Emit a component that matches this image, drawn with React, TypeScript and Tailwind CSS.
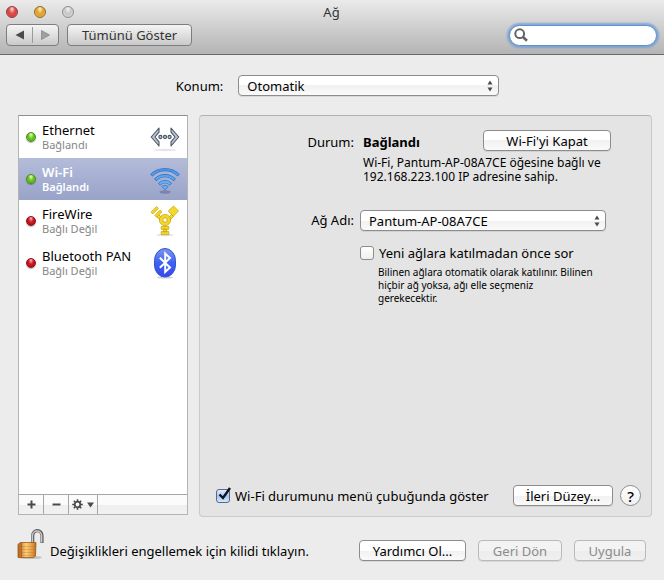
import { useState } from "react";
import type { ButtonHTMLAttributes, ReactNode } from "react";
import clsx from "clsx";

function PushButton({ className, children, ...rest }: ButtonHTMLAttributes<HTMLButtonElement>) {
  return (
    <button
      type="button"
      className={clsx(
        "flex h-[21px] shrink-0 items-center justify-center rounded-[4px] border whitespace-nowrap",
        "border-[#8c8c8c] bg-linear-to-b from-white from-50% via-[#f1f1f1] via-50% to-[#fafafa] shadow-[0_1px_0_rgba(0,0,0,0.08)]",
        "disabled:border-[#b9b9b9] disabled:from-[#f3f3f3] disabled:via-[#ececec] disabled:to-[#f0f0f0] disabled:text-[#8b8b8b]",
        className,
      )}
      {...rest}
    >
      {children}
    </button>
  );
}

function PopUp({ id, value, className }: { id: string; value: string; className: string }) {
  return (
    <div className={clsx("relative h-[21px]", className)}>
      <select
        id={id}
        defaultValue={value}
        className="h-full w-full appearance-none rounded-[4px] border border-[#8c8c8c] bg-linear-to-b from-white from-50% via-[#f1f1f1] via-50% to-[#fafafa] px-2 leading-4 shadow-[0_1px_0_rgba(0,0,0,0.08)] outline-none"
      >
        <option>{value}</option>
      </select>
      <svg className="pointer-events-none absolute top-[5px] right-[6px]" width="6" height="12" viewBox="0 0 6 12" fill="#4a4a4a">
        <path d="M3 0.5 5.5 4.5H0.5ZM3 11.5 5.5 7.5H0.5Z" />
      </svg>
    </div>
  );
}

function CheckBox({ id, label, initial }: { id: string; label: string; initial: boolean }) {
  const [on, setOn] = useState(initial);
  return (
    <div className="flex items-center gap-[5px]">
      <span className="relative size-[14px] shrink-0">
        <input
          id={id}
          type="checkbox"
          checked={on}
          onChange={(e) => setOn(e.target.checked)}
          className="block size-full appearance-none rounded-[3px] border border-[#8c8c8c] bg-linear-to-b from-white to-[#efefef] checked:border-[#5a6590] checked:from-[#e3edfb] checked:via-[#a5c5ee] checked:to-[#cfe9fd]"
        />
        {on && (
          <svg className="pointer-events-none absolute -top-[3px] left-0" width="17" height="17" viewBox="0 0 17 17" fill="none" stroke="#10131f" strokeWidth="2.4">
            <path d="M3.5 8.5 7 12 14 2" />
          </svg>
        )}
      </span>
      <label htmlFor={id} className="whitespace-nowrap">{label}</label>
    </div>
  );
}

function EthernetIcon() {
  return (
    <svg width="30" height="32" viewBox="0 0 30 32">
      <ellipse cx="15" cy="29" rx="12" ry="1.2" fill="#000" opacity="0.1" />
      <g fill="#b9c2cf" stroke="#4d5768" strokeWidth="1.1" strokeLinejoin="round">
        <path d="M9 7 1.2 16 9 25V20.8L5 16 9 11.2Z" />
        <path d="M21 7 28.8 16 21 25V20.8L25 16 21 11.2Z" />
        <circle cx="10.4" cy="16" r="1.6" />
        <circle cx="15" cy="16" r="1.6" />
        <circle cx="19.6" cy="16" r="1.6" />
      </g>
    </svg>
  );
}

function WifiIcon() {
  return (
    <svg width="30" height="32" viewBox="0 0 30 32">
      <defs>
        <linearGradient id="wifi" x1="0" y1="0" x2="0" y2="32" gradientUnits="userSpaceOnUse">
          <stop offset="0.2" stopColor="#4a94e8" />
          <stop offset="0.8" stopColor="#74bcfc" />
        </linearGradient>
      </defs>
      <ellipse cx="15" cy="29" rx="5.5" ry="1.8" fill="#3c4568" opacity="0.35" />
      <g fill="none" stroke="#2d6fc4" strokeWidth="3.2">
        <path d="M1.3 12.4C9 4.6 21 4.6 28.7 12.4" />
        <path d="M5.2 17C11 11.2 19 11.2 24.8 17" />
        <path d="M9.1 21.4C12.8 18 17.2 18 20.9 21.4" />
      </g>
      <g fill="none" stroke="url(#wifi)" strokeWidth="2">
        <path d="M1.8 12C9.3 4.8 20.7 4.8 28.2 12" />
        <path d="M5.7 16.6C11.2 11.4 18.8 11.4 24.3 16.6" />
        <path d="M9.6 21C13 18.2 17 18.2 20.4 21" />
      </g>
      <path d="M11.8 23.6C13.7 22 16.3 22 18.2 23.6L15 27Z" fill="#63aef6" stroke="#2d6fc4" strokeWidth="0.7" />
    </svg>
  );
}

function FireWireIcon() {
  return (
    <svg width="30" height="32" viewBox="0 0 30 32">
      <ellipse cx="15" cy="30" rx="9" ry="1.2" fill="#000" opacity="0.12" />
      <g fill="#f4d92c" stroke="#c9a70c" strokeWidth="0.8" strokeLinejoin="round">
        <path d="M8.5 9.5 13 14 11 16 6.5 11.5ZM21.5 9.5 17 14 19 16 23.5 11.5Z" />
        <path d="M18.3 6 23.5 1 28.5 6 23.3 11.2Z" />
        <path d="M4.8 10.4 10.2 5 12 6.8 6.6 12.2Z" />
        <path d="M1 7.2 6.6 1.6 8.4 3.4 2.8 9Z" />
        <circle cx="15" cy="15" r="5.6" />
        <path d="M13.3 24H16.7V26.8H13.3ZM11.2 21.5H18.8V24.3H11.2ZM11.2 26.6H18.8V29.6H11.2Z" />
      </g>
      <circle cx="15" cy="15" r="2.3" fill="#fffbe0" stroke="#c9a70c" strokeWidth="0.9" />
    </svg>
  );
}

function BluetoothIcon() {
  return (
    <svg width="30" height="32" viewBox="0 0 30 32">
      <defs>
        <linearGradient id="bt" x1="0" y1="0" x2="0" y2="1">
          <stop offset="0" stopColor="#8095f2" />
          <stop offset="0.5" stopColor="#3f63f0" />
          <stop offset="1" stopColor="#3747ee" />
        </linearGradient>
      </defs>
      <ellipse cx="15" cy="30.5" rx="8" ry="1" fill="#000" opacity="0.2" />
      <rect x="4.5" y="1.5" width="21" height="28.5" rx="10.5" ry="12" fill="url(#bt)" stroke="#2c55cf" />
      <path d="M9.8 10.7 20 20.5 15.2 25V6.5L20 11 9.8 20.8" fill="none" stroke="#fff" strokeWidth="2" />
    </svg>
  );
}

const services: { name: string; state: string; up: boolean; icon: ReactNode }[] = [
  { name: "Ethernet", state: "Bağlandı", up: true, icon: <EthernetIcon /> },
  { name: "Wi-Fi", state: "Bağlandı", up: true, icon: <WifiIcon /> },
  { name: "FireWire", state: "Bağlı Değil", up: false, icon: <FireWireIcon /> },
  { name: "Bluetooth PAN", state: "Bağlı Değil", up: false, icon: <BluetoothIcon /> },
];

function StatusDot({ up }: { up: boolean }) {
  return (
    <span
      className={clsx(
        "size-[10px] shrink-0 rounded-full border shadow-[0_1px_1px_rgba(0,0,0,0.3)]",
        up
          ? "border-[#4b8a14] bg-[radial-gradient(ellipse_at_50%_20%,#e4f8c8_0%,#6ccb24_45%,#58b814_65%,#b0f85c_100%)]"
          : "border-[#8c1018] bg-[radial-gradient(ellipse_at_50%_15%,#f6c4c4_0%,#d4202a_40%,#b80c16_70%,#f05050_100%)]",
      )}
    />
  );
}

function Sidebar() {
  const [selected, setSelected] = useState("Wi-Fi");
  return (
    <aside className="mb-[2px] flex w-[170px] shrink-0 flex-col border border-[#b4b4b4] border-t-[#8e8e8e] bg-white">
      <ul className="flex-1">
        {services.map((s) => {
          const active = s.name === selected;
          return (
            <li key={s.name}>
              <button
                type="button"
                onClick={() => setSelected(s.name)}
                className={clsx(
                  "flex h-[42px] w-full items-center gap-[6px] px-[7px] text-left",
                  active && "bg-linear-to-b from-[#b4bcda] to-[#99a3c9] text-white",
                )}
              >
                <StatusDot up={s.up} />
                <span className="flex min-w-0 flex-1 flex-col pb-[2px] whitespace-nowrap">
                  <span className={clsx("text-[13px] leading-4", active && "font-semibold")}>{s.name}</span>
                  <span className={clsx("text-[11px] leading-[13px]", active ? "font-semibold" : "text-[#868686]")}>{s.state}</span>
                </span>
                <span className="-ml-8 shrink-0">{s.icon}</span>
              </button>
            </li>
          );
        })}
      </ul>
      <div className="flex h-5 border-t border-[#a6a6a6] bg-linear-to-b from-[#fbfbfb] from-50% via-[#efefef] via-50% to-[#f1f1f1]">
        <button type="button" aria-label="+" className="flex w-[25px] items-center justify-center border-r border-[#a6a6a6]">
          <svg width="9" height="9" viewBox="0 0 9 9" stroke="#4a4a4a" strokeWidth="2"><path d="M0.5 4.5H8.5M4.5 0.5V8.5" /></svg>
        </button>
        <button type="button" aria-label="−" className="flex w-[25px] items-center justify-center border-r border-[#a6a6a6]">
          <svg width="9" height="9" viewBox="0 0 9 9" stroke="#4a4a4a" strokeWidth="2"><path d="M0.5 4.5H8.5" /></svg>
        </button>
        <button type="button" aria-label="⚙" className="flex w-[29px] items-center justify-center gap-1 border-r border-[#a6a6a6]">
          <svg width="11" height="11" viewBox="0 0 11 11" fill="none" stroke="#4a4a4a">
            <circle cx="5.5" cy="5.5" r="2.8" strokeWidth="1.8" />
            <path strokeWidth="1.6" d="M5.5 0.2V2.2M5.5 8.8V10.8M0.2 5.5H2.2M8.8 5.5H10.8M1.8 1.8 3.2 3.2M7.8 7.8 9.2 9.2M1.8 9.2 3.2 7.8M7.8 3.2 9.2 1.8" />
          </svg>
          <svg width="7" height="6" viewBox="0 0 7 6" fill="#4a4a4a"><path d="M0 0.5H7L3.5 5.5Z" /></svg>
        </button>
      </div>
    </aside>
  );
}

function LockIcon() {
  return (
    <svg width="28" height="32" viewBox="0 0 28 32">
      <defs>
        <linearGradient id="lock" x1="0" y1="0" x2="1" y2="0">
          <stop offset="0" stopColor="#a85d1c" />
          <stop offset="0.18" stopColor="#d98a38" />
          <stop offset="0.45" stopColor="#f9cf7c" />
          <stop offset="0.8" stopColor="#e59a3c" />
          <stop offset="1" stopColor="#b66a1c" />
        </linearGradient>
      </defs>
      <ellipse cx="13" cy="28.5" rx="12" ry="1.6" fill="#000" opacity="0.18" />
      <path d="M15.7 14V7C15.7 -0.2 25 -0.2 25 7V14" fill="none" stroke="#5d5d5d" strokeWidth="3.2" />
      <path d="M15.4 13V7C15.4 0.2 24.6 0.2 24.6 7V13.5" fill="none" stroke="#c9c9c9" strokeWidth="1.5" />
      <path d="M1 15.5 3 13.5H19L18.5 27 16.5 28.5H1Z" fill="url(#lock)" stroke="#9c5a1a" strokeWidth="0.8" />
      <path d="M4.5 17.5H18M4.5 20.5H18M4.5 23.5H18M4.5 26.5H18" stroke="#a8661e" strokeWidth="0.7" opacity="0.4" />
      <path d="M4.2 14V28" stroke="#8e4c15" strokeWidth="0.8" />
    </svg>
  );
}

function TitleBar() {
  return (
    <header className="h-[55px] border-b border-[#686868] bg-linear-to-b from-[#ebebeb] to-[#b4b4b4] pr-[7px] pl-[6px]">
      <div className="flex h-6 items-center">
        <div className="flex flex-1 gap-4">
          <button type="button" aria-label="Kapat" className="size-3 rounded-full border border-[#8f3a38] bg-[radial-gradient(ellipse_at_50%_20%,#fbdcdc_0%,#e0504c_40%,#d8403e_65%,#fba6a0_100%)]" />
          <button type="button" aria-label="Küçült" className="size-3 rounded-full border border-[#8f6a22] bg-[radial-gradient(ellipse_at_50%_20%,#fdf1cc_0%,#e3a938_40%,#dfa030_60%,#fce88c_100%)]" />
          <button type="button" disabled aria-label="Büyüt" className="size-3 rounded-full border border-[#8e8e8e] bg-[radial-gradient(ellipse_at_50%_20%,#f4f4f4_0%,#c6c6c6_45%,#e2e2e2_100%)]" />
        </div>
        <h1 className="text-[13px] text-[#333]">Ağ</h1>
        <div className="flex-1" />
      </div>
      <div className="flex items-center text-[#333]">
        <div className="flex h-[22px] w-[53px] items-center rounded-[4px] border border-[#7d7d7d] bg-linear-to-b from-[#f5f5f5] to-[#cacaca]">
          <button type="button" aria-label="Geri" className="flex flex-1 justify-center">
            <svg width="9" height="10" viewBox="0 0 9 10" fill="#4b4b4b"><path d="M9 0.5V9.5L0.5 5Z" /></svg>
          </button>
          <span className="h-4 w-px bg-[#9b9b9b]" />
          <button type="button" disabled aria-label="İleri" className="flex flex-1 justify-center">
            <svg width="9" height="10" viewBox="0 0 9 10" fill="#a0a0a0" stroke="#777" strokeWidth="0.6"><path d="M0.5 0.5V9.5L8.5 5Z" /></svg>
          </button>
        </div>
        <button type="button" className="ml-2 h-[22px] w-[125px] rounded-[4px] border border-[#7d7d7d] bg-linear-to-b from-[#f5f5f5] to-[#cacaca] text-[13px] leading-5">
          Tümünü Göster
        </button>
        <div className="ml-auto flex h-[21px] w-[148px] items-center rounded-full border border-[#5f8fce] bg-white pl-1 shadow-[0_0_2px_2px_rgba(105,155,215,0.75)]">
          <svg className="shrink-0" width="14" height="14" viewBox="0 0 14 14" fill="none" stroke="#646464">
            <circle cx="5.7" cy="5.7" r="4.4" strokeWidth="2" />
            <path d="M9 9 13 12.8" strokeWidth="2.6" />
          </svg>
          <input type="search" aria-label="Ara" className="ml-1 h-4 w-full min-w-0 bg-transparent pr-3 outline-none" />
        </div>
      </div>
    </header>
  );
}

function WifiPanel() {
  return (
    <section className="flex flex-1 flex-col justify-between rounded-[4px] border border-[#cacaca] border-t-[#b2b2b2] bg-[#e4e4e4] pt-[14px] pr-[10px] pb-[10px] pl-4">
      <div className="grid max-w-[395px] grid-cols-[138px_1fr] gap-x-[6px]">
        <span className="pt-[2px] text-right leading-[21px]">Durum:</span>
        <div className="pl-[3px]">
          <div className="flex items-start justify-between">
            <strong className="pt-[2px] leading-[21px] font-bold">Bağlandı</strong>
            <PushButton className="w-[128px]">Wi-Fi'yi Kapat</PushButton>
          </div>
          <p className="mt-[3px] text-[12px] leading-[14px] whitespace-nowrap">
            Wi-Fi, Pantum-AP-08A7CE öğesine bağlı ve
            <br />
            192.168.223.100 IP adresine sahip.
          </p>
        </div>
        <label htmlFor="ssid" className="mt-[26px] text-right leading-[21px]">Ağ Adı:</label>
        <PopUp id="ssid" value="Pantum-AP-08A7CE" className="mt-[26px] mr-[5px]" />
        <div className="col-start-2 mt-[13px]">
          <CheckBox id="ask" label="Yeni ağlara katılmadan önce sor" initial={false} />
          <p className="mt-1 pl-[18px] text-[10px] leading-[13px] whitespace-nowrap">
            Bilinen ağlara otomatik olarak katılınır. Bilinen
            <br />
            hiçbir ağ yoksa, ağı elle seçmeniz
            <br />
            gerekecektir.
          </p>
        </div>
      </div>
      <div className="flex items-center">
        <CheckBox id="menubar" label="Wi-Fi durumunu menü çubuğunda göster" initial />
        <PushButton className="ml-auto w-[100px]">İleri Düzey...</PushButton>
        <button type="button" className="ml-[7px] size-[21px] shrink-0 rounded-full border border-[#8c8c8c] bg-linear-to-b from-white to-[#f0f0f0] text-[15px] leading-4 font-medium">
          ?
        </button>
      </div>
    </section>
  );
}

export default function App() {
  return (
    <div className="flex min-h-screen flex-col bg-[#ececec] font-['Noto_Sans','Lucida_Grande',sans-serif] text-[13px] leading-[18px] text-black">
      <TitleBar />
      <div className="flex items-center justify-center gap-[15px] pt-5 pb-[19px] pl-[11px]">
        <label htmlFor="location">Konum:</label>
        <PopUp id="location" value="Otomatik" className="w-[261px]" />
      </div>
      <main className="flex flex-1 gap-[11px] pr-3 pl-[18px]">
        <Sidebar />
        <WifiPanel />
      </main>
      <footer className="flex h-[63px] items-center gap-[5px] pt-1 pr-[18px] pl-[17px]">
        <button type="button" aria-label="Kilit" className="mb-3 shrink-0"><LockIcon /></button>
        <p className="whitespace-nowrap">Değişiklikleri engellemek için kilidi tıklayın.</p>
        <div className="ml-auto flex gap-3">
          <PushButton className="w-[107px]">Yardımcı Ol...</PushButton>
          <PushButton className="w-[84px]" disabled>Geri Dön</PushButton>
          <PushButton className="w-[72px]" disabled>Uygula</PushButton>
        </div>
      </footer>
    </div>
  );
}
